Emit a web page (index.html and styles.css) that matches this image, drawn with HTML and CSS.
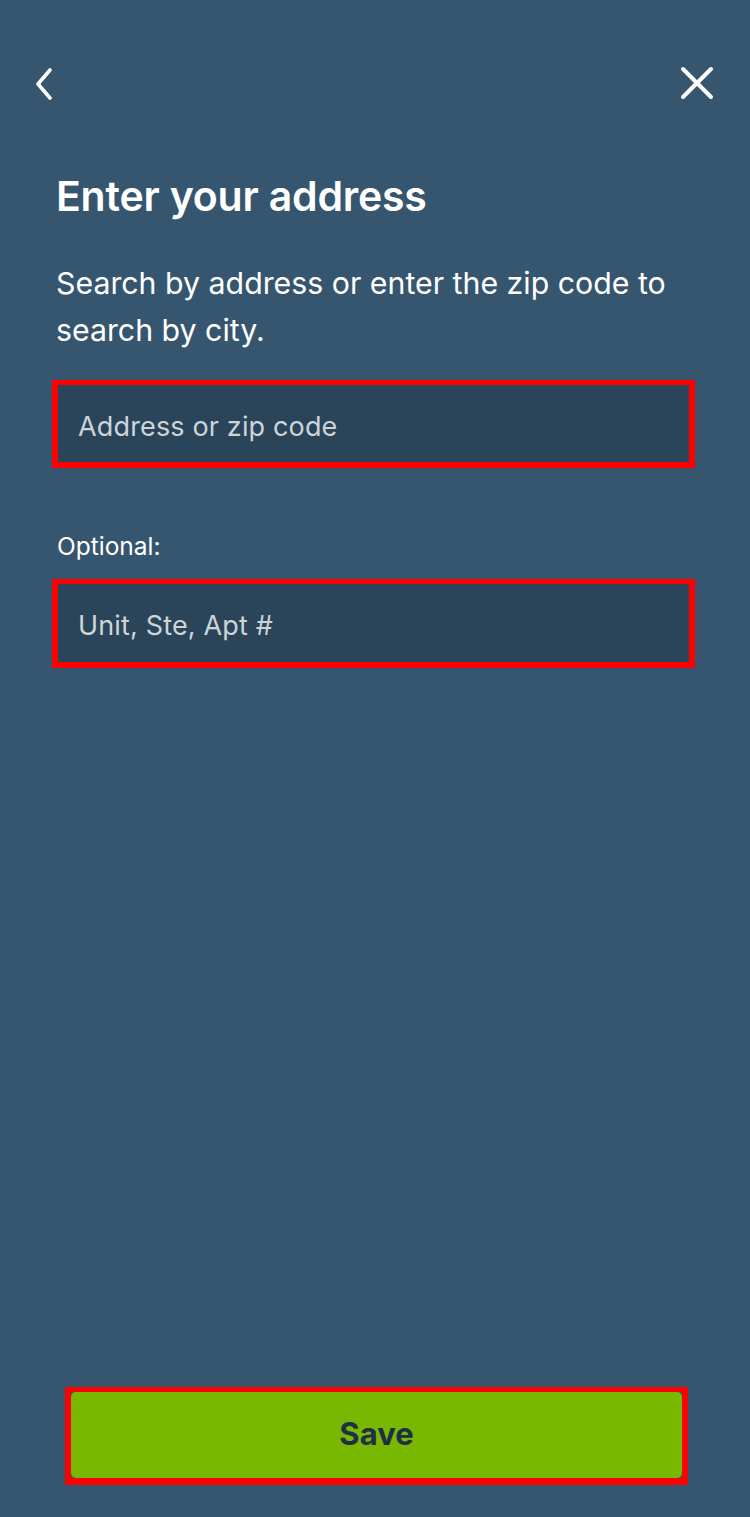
FILE: index.html
```html
<!DOCTYPE html>
<html lang="en">
<head>
<meta charset="utf-8">
<title>Enter your address</title>
<link rel="stylesheet" href="styles.css">
</head>
<body>
<div class="screen">
  <header class="topbar">
    <svg class="icon-back" width="18" height="32" viewBox="0 0 18 32" aria-label="Back">
      <polyline points="15,2 3,16 15,30" fill="none" stroke="#fff" stroke-width="3.6" stroke-linecap="round" stroke-linejoin="round"/>
    </svg>
    <svg class="icon-close" width="34" height="34" viewBox="0 0 34 34" aria-label="Close">
      <path d="M3 3 L31 31 M31 3 L3 31" fill="none" stroke="#fff" stroke-width="4" stroke-linecap="round"/>
    </svg>
  </header>

  <main class="content">
    <h1 class="title">Enter your address</h1>
    <p class="subtitle">Search by address or enter the zip code to search by city.</p>

    <div class="field field-address">
      <div class="field-input">Address or zip code</div>
    </div>

    <div class="label">Optional:</div>

    <div class="field field-unit">
      <div class="field-input">Unit, Ste, Apt #</div>
    </div>
  </main>

  <footer class="footer">
    <div class="btn-frame">
      <button class="btn-save">Save</button>
    </div>
  </footer>
</div>
</body>
</html>
```

FILE: styles.css
```css
* {
  box-sizing: border-box;
}

html, body {
  margin: 0;
  padding: 0;
  background: #36566f;
}

body {
  font-family: Inter, "Noto Sans", "Liberation Sans", sans-serif;
  color: #ffffff;
}

.screen {
  min-height: 1517px;
  display: flex;
  flex-direction: column;
}

.topbar {
  display: flex;
  justify-content: space-between;
  align-items: flex-start;
  padding: 0 36px 0 35px;
  margin-top: 66px;
  height: 34px;
}

.icon-back {
  margin-top: 2px;
  display: block;
}

.icon-close {
  display: block;
}

.content {
  display: flex;
  flex-direction: column;
  padding: 0 55px 0 52px;
}

.title {
  margin: 72px 0 0 4px;
  font-size: 41px;
  line-height: 48px;
  font-weight: 600;
  letter-spacing: -0.2px;
}

.subtitle {
  margin: 40px 0 0 4px;
  font-size: 30.3px;
  line-height: 47px;
  font-weight: 400;
}

.field {
  border: 6px solid #ff0000;
  border-top-width: 5px;
  height: 88px;
}

.field-address {
  margin-top: 26px;
}

.field-unit {
  margin-top: 18px;
  height: 89px;
}

.field-input {
  height: 100%;
  background: #2a4559;
  color: #cdd4da;
  font-size: 27px;
  line-height: 32px;
  padding: 26px 20px 0 20px;
  letter-spacing: 0.15px;
}

.label {
  margin: 63px 0 0 5px;
  font-size: 24.5px;
  line-height: 30px;
  color: #ffffff;
}

.footer {
  margin-top: auto;
  padding: 0 62px 32px 65px;
}

.btn-frame {
  border: 6px solid #ff0000;
  border-top-width: 5px;
  border-bottom-width: 7px;
  height: 98px;
}

.btn-save {
  display: block;
  width: 100%;
  height: 100%;
  border: 0;
  border-radius: 5px;
  background: #78b800;
  color: #1f3046;
  font-family: Inter, "Liberation Sans", sans-serif;
  font-size: 31px;
  font-weight: 700;
  padding: 0 0 3px 0;
}
```
